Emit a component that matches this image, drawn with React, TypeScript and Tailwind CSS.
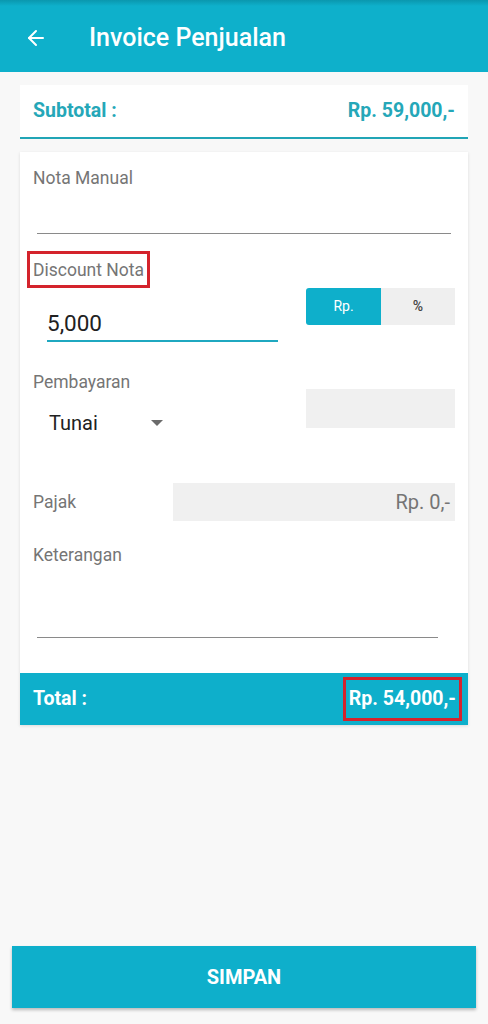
import { ArrowLeft } from "lucide-react";

function Label({ children }: { children: React.ReactNode }) {
  return <p className="h-5 text-[17.5px] leading-5 text-[#757575]">{children}</p>;
}

export default function App() {
  return (
    <div className="flex min-h-screen flex-col bg-[#f8f8f8] font-['Roboto',sans-serif]">
      <header className="flex h-[72px] items-center bg-[linear-gradient(to_bottom,#0a97ae_0px,#0eb0cb_6px,#0eb0cb_100%)] px-6 pt-1 text-white">
        <ArrowLeft size={24} strokeWidth={2} />
        <h1 className="ml-[41px] text-[25px] font-medium">Invoice Penjualan</h1>
      </header>

      <div className="mx-5 mt-[13px] flex h-[54px] items-center justify-between border-b-2 border-[#21a5b6] bg-white px-[13px] text-[19.5px] font-bold text-[#25a7b8]">
        <span>Subtotal :</span>
        <span>Rp. 59,000,-</span>
      </div>

      <div className="mx-5 mt-[13px] bg-white shadow-[0_1px_3px_rgba(0,0,0,0.12)]">
        <div className="px-[13px] pt-4">
          <Label>Nota Manual</Label>
          <div className="mx-1 h-[46px] border-b border-[#8a8a8a]" />

          <div className="-ml-[6px] mt-[17px] inline-flex h-[37px] items-center border-[3px] border-[#d4232c] px-[3px]">
            <Label>Discount Nota</Label>
          </div>

          <div className="flex items-start">
            <div className="ml-[14px] flex h-[54px] w-[231px] items-end border-b-2 border-[#1fa8c0] pb-[5px] text-[22.5px] leading-6 text-[#212121]">
              5,000
            </div>
            <div className="ml-auto flex h-[37px] w-[149px] text-[14px]">
              <div className="flex w-[75px] items-center justify-center rounded-l-[3px] bg-[#0eafcb] text-white">Rp.</div>
              <div className="flex flex-1 items-center justify-center bg-[#efefef] font-medium text-[#444]">%</div>
            </div>
          </div>

          <div className="mt-[30px] flex items-start">
            <div>
              <Label>Pembayaran</Label>
              <div className="flex h-[61px] w-[130px] items-center justify-between pl-4 text-[20px] text-[#212121]">
                <span>Tunai</span>
                <svg width="12" height="6" viewBox="0 0 12 6">
                  <path d="M0 0h12L6 6z" fill="#6b6b6b" />
                </svg>
              </div>
            </div>
            <div className="ml-auto mt-[17px] h-[39px] w-[149px] bg-[#f0f0f0]" />
          </div>

          <div className="mt-[30px] flex items-center">
            <div className="flex-1">
              <Label>Pajak</Label>
            </div>
            <div className="flex h-[38px] w-[282px] items-center justify-end bg-[#f0f0f0] pr-[5px] text-[20px] text-[#757575]">
              Rp. 0,-
            </div>
          </div>

          <div className="mt-6">
            <Label>Keterangan</Label>
          </div>
          <div className="ml-1 mr-[17px] h-[73px] border-b border-[#8a8a8a]" />
          <div className="h-[35px]" />
        </div>

        <div className="flex h-[52px] items-center justify-between bg-[#0eafcb] pl-[13px] pr-[6px] text-[19.5px] font-bold text-white">
          <span>Total :</span>
          <span className="flex h-[44px] items-center border-[3px] border-[#d4232c] px-[3px]">Rp. 54,000,-</span>
        </div>
      </div>

      <button className="mx-3 mb-4 mt-auto flex h-[62px] items-center justify-center bg-[#0eafcb] text-[20px] font-bold text-white shadow-[0_2px_3px_rgba(0,0,0,0.25)]">
        SIMPAN
      </button>
    </div>
  );
}
